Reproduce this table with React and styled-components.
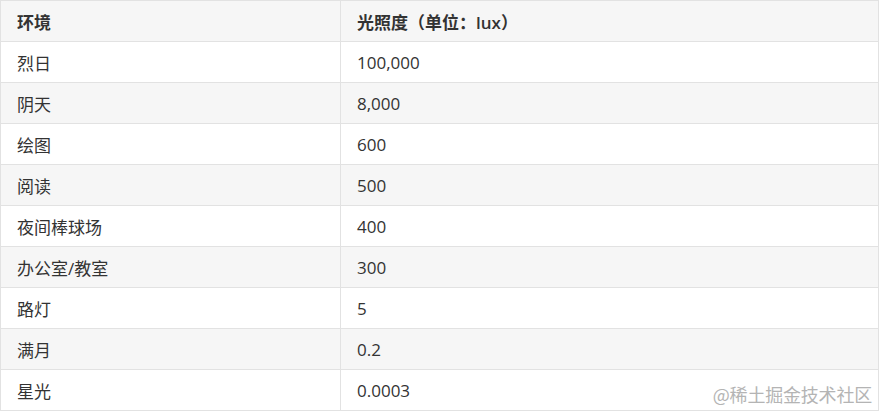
import React from 'react';
import styled, { createGlobalStyle } from 'styled-components';

const GlobalStyle = createGlobalStyle`
  body {
    margin: 0;
    background: #ffffff;
    font-family: "Open Sans", "Noto Sans CJK SC", sans-serif;
  }
`;

const Wrapper = styled.div`
  position: relative;
  width: 880px;
`;

const Table = styled.table`
  width: 879px;
  border-collapse: collapse;
  font-size: 17px;
  color: #333333;
`;

const Row = styled.tr`
  background: ${(props) => (props.striped ? '#f6f6f6' : '#ffffff')};
`;

const HeadCell = styled.th`
  height: 41px;
  padding: 0 16px;
  border: 1px solid #e2e2e2;
  text-align: left;
  font-weight: 600;
  color: #333333;
  width: ${(props) => props.width || 'auto'};
  box-sizing: border-box;
`;

const Cell = styled.td`
  height: 41px;
  padding: 0 16px;
  border: 1px solid #e2e2e2;
  font-weight: 400;
  box-sizing: border-box;
`;

const Watermark = styled.div`
  position: absolute;
  right: 8px;
  bottom: 4px;
  font-size: 18px;
  color: #b4b4b4;
  font-family: "Noto Sans CJK SC", sans-serif;
  letter-spacing: -0.2px;
  pointer-events: none;
`;

// 环境 / 光照度
const rows = [
  ['烈日', '100,000'],
  ['阴天', '8,000'],
  ['绘图', '600'],
  ['阅读', '500'],
  ['夜间棒球场', '400'],
  ['办公室/教室', '300'],
  ['路灯', '5'],
  ['满月', '0.2'],
  ['星光', '0.0003'],
];

const App = () => {
  return (
    <>
      <GlobalStyle />
      <Wrapper>
        <Table>
          <thead>
            <Row striped>
              <HeadCell width="340px">环境</HeadCell>
              <HeadCell>光照度（单位：lux）</HeadCell>
            </Row>
          </thead>
          <tbody>
            {rows.map(([env, lux], i) => (
              <Row key={env} striped={i % 2 === 1}>
                <Cell>{env}</Cell>
                <Cell>{lux}</Cell>
              </Row>
            ))}
          </tbody>
        </Table>
        <Watermark>@稀土掘金技术社区</Watermark>
      </Wrapper>
    </>
  );
};

export default App;
